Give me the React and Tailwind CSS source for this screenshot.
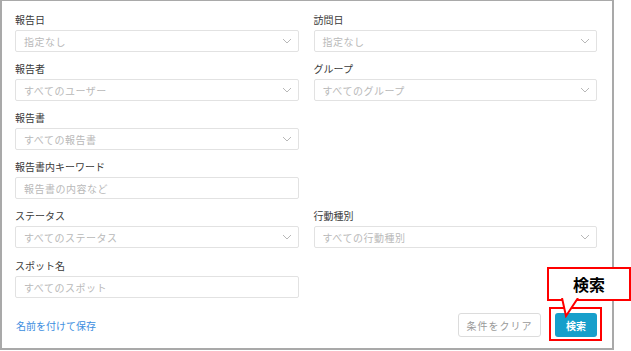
import React from "react";

const font = { fontFamily: '"Noto Sans CJK JP", "Noto Sans", sans-serif' };

function Chevron() {
    return (
        <svg width="10" height="6" viewBox="0 0 10 6" fill="none">
            <polyline
                points="1,1 5,5 9,1"
                stroke="#b8b8b8"
                strokeWidth="1"
            />
        </svg>
    );
}

function Field({ label, placeholder, select = true, className = "" }) {
    return (
        <div className={className}>
            <div className="text-[10px] leading-[14px] text-[#3a3a3a] mb-[3px]">
                {label}
            </div>
            <div className="h-[22px] border border-[#e2e2e2] rounded-[2px] pl-[8px] pr-[6px] flex items-center justify-between text-[10px] text-[#b9b9b9]">
                <span className="tracking-[0.5px]">{placeholder}</span>
                {select && <Chevron />}
            </div>
        </div>
    );
}

export default function App() {
    return (
        <div className="relative w-[631px] h-[351px] bg-white" style={font}>
            <div className="w-[614px] h-[350px] border-2 border-t border-[#a9a9a9] pt-[12px] pl-[13px] pr-[15px]">
                <div className="grid grid-cols-2 gap-x-[15px] gap-y-[10px]">
                    <Field label="報告日" placeholder="指定なし" />
                    <Field label="訪問日" placeholder="指定なし" />
                    <Field label="報告者" placeholder="すべてのユーザー" />
                    <Field label="グループ" placeholder="すべてのグループ" />
                    <Field label="報告書" placeholder="すべての報告書" />
                    <div />
                    <Field
                        label="報告書内キーワード"
                        placeholder="報告書の内容など"
                        select={false}
                    />
                    <div />
                    <Field label="ステータス" placeholder="すべてのステータス" />
                    <Field label="行動種別" placeholder="すべての行動種別" />
                    <Field
                        label="スポット名"
                        placeholder="すべてのスポット"
                        select={false}
                        className="mt-[1px]"
                    />
                    <div />
                </div>

                {/* Footer */}
                <div className="mt-[15px] h-[24px] flex items-center justify-between">
                    <a className="text-[10px] text-[#3d8ee0] pl-[1px]">
                        名前を付けて保存
                    </a>
                    <div className="flex items-center gap-[14px]">
                        <button className="w-[83px] h-[24px] border border-[#dcdcdc] rounded-[3px] text-[10px] text-[#9a9a9a] tracking-[1px] bg-white">
                            条件をクリア
                        </button>
                        <button className="w-[42px] h-[24px] rounded-[3px] bg-[#169fcb] text-[10px] font-bold text-white">
                            検索
                        </button>
                    </div>
                </div>
            </div>

            {/* Highlight around search button */}
            <div className="absolute left-[549px] top-[307px] w-[53px] h-[34px] border-2 border-[#ff0000]" />

            {/* Callout */}
            <div className="absolute left-[547px] top-[267px] w-[84px] h-[34px] border-2 border-[#ff0000] bg-white flex items-center justify-center">
                <span className="text-[16px] font-bold text-black leading-none">
                    検索
                </span>
            </div>
            <svg
                className="absolute left-[558px] top-[298px]"
                width="24"
                height="20"
                viewBox="0 0 24 20"
            >
                <polygon points="4,0 8,18 20,0" fill="white" />
                <polyline
                    points="4,0 8,18 20,0"
                    fill="none"
                    stroke="#ff0000"
                    strokeWidth="2"
                />
            </svg>
        </div>
    );
}
